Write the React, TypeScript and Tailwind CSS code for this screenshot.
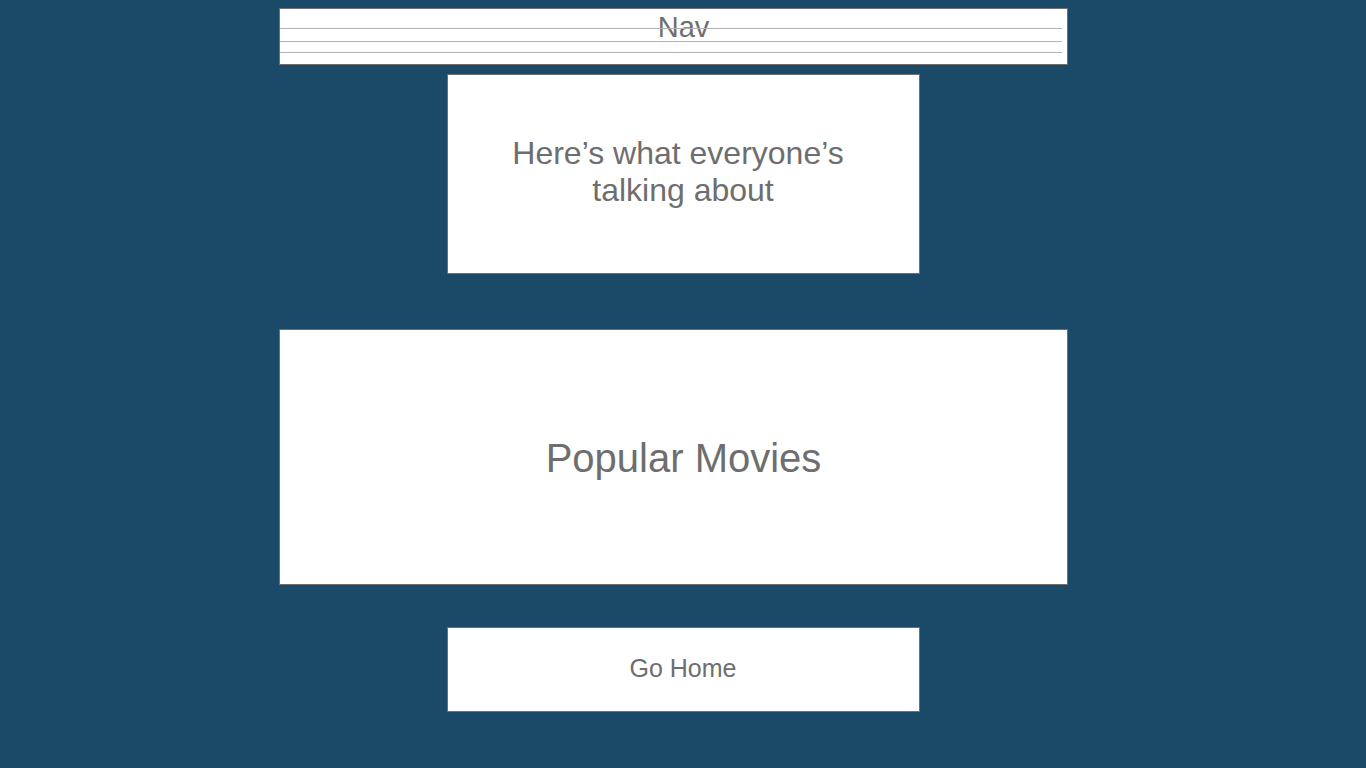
export default function App() {
  return (
    <div
      className="min-h-screen w-full bg-[#1b4a68] flex flex-col items-center pt-[8px] text-[#6e6e6e]"
      style={{ fontFamily: '"Liberation Sans", Arial, sans-serif' }}
    >
      {/* Nav */}
      <div className="relative w-[789px] h-[57px] mr-[19px] bg-white border border-[#6f6f6f] pl-[20px] flex justify-center">
        <span className="text-[29px] leading-[36px]">Nav</span>
        <div className="absolute left-0 right-[5px] top-[19px] h-px bg-[#b3b3b3]" />
        <div className="absolute left-0 right-[5px] top-[32px] h-px bg-[#b3b3b3]" />
        <div className="absolute left-0 right-[5px] top-[43px] h-px bg-[#b3b3b3]" />
      </div>

      {/* Heading */}
      <div className="mt-[9px] w-[473px] h-[200px] bg-white border border-[#6f6f6f] flex items-center justify-center">
        <p className="text-center text-[32px] leading-[37px] pb-[4px]">
          <span className="block pr-[10px]">Here’s what everyone’s</span>
          <span className="block">talking about</span>
        </p>
      </div>

      {/* Popular movies */}
      <div className="mt-[55px] w-[789px] h-[256px] mr-[19px] pl-[20px] bg-white border border-[#6f6f6f] flex items-center justify-center">
        <span className="text-[40px] leading-[48px] pt-[2px]">Popular Movies</span>
      </div>

      {/* Go home */}
      <button className="mt-[42px] w-[473px] h-[85px] bg-white border border-[#6f6f6f] flex items-center justify-center">
        <span className="text-[25px] leading-[30px] pb-[4px]">Go Home</span>
      </button>
    </div>
  );
}
